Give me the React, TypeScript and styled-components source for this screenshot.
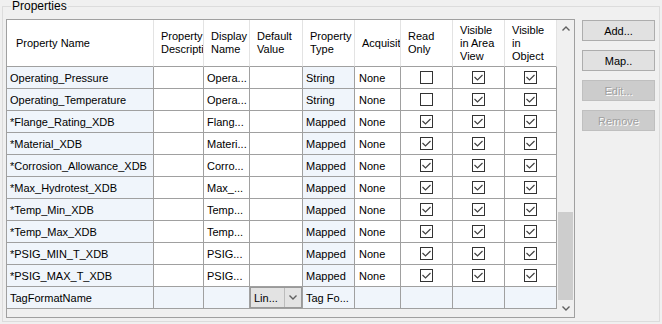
import styled, { createGlobalStyle } from 'styled-components'

const GlobalStyle = createGlobalStyle`
  html, body {
    margin: 0;
    padding: 0;
    background: #f0f0f0;
  }
  body {
    font-family: "Liberation Sans", Arial, sans-serif;
    font-size: 11px;
    color: #000;
  }
`

type Column = {
  title: string;
  width: number;
  pad?: number;
}

type PropertyRow = {
  name: string;
  display: string;
  type: string;
  acq: string;
  readOnly?: boolean;
  area?: boolean;
  obj?: boolean;
  combo?: string;
}

const columns: Column[] = [
  { title: 'Property Name', width: 147, pad: 9 },
  { title: 'Property\nDescription', width: 50 },
  { title: 'Display\nName', width: 46 },
  { title: 'Default\nValue', width: 53 },
  { title: 'Property\nType', width: 52 },
  { title: 'Acquisition', width: 46 },
  { title: 'Read\nOnly', width: 52 },
  { title: 'Visible\nin Area\nView', width: 52 },
  { title: 'Visible\nin\nObject', width: 52 },
]

const rows: PropertyRow[] = [
  { name: 'Operating_Pressure', display: 'Opera...', type: 'String', acq: 'None', readOnly: false, area: true, obj: true },
  { name: 'Operating_Temperature', display: 'Opera...', type: 'String', acq: 'None', readOnly: false, area: true, obj: true },
  { name: '*Flange_Rating_XDB', display: 'Flang...', type: 'Mapped', acq: 'None', readOnly: true, area: true, obj: true },
  { name: '*Material_XDB', display: 'Materi...', type: 'Mapped', acq: 'None', readOnly: true, area: true, obj: true },
  { name: '*Corrosion_Allowance_XDB', display: 'Corro...', type: 'Mapped', acq: 'None', readOnly: true, area: true, obj: true },
  { name: '*Max_Hydrotest_XDB', display: 'Max_...', type: 'Mapped', acq: 'None', readOnly: true, area: true, obj: true },
  { name: '*Temp_Min_XDB', display: 'Temp...', type: 'Mapped', acq: 'None', readOnly: true, area: true, obj: true },
  { name: '*Temp_Max_XDB', display: 'Temp...', type: 'Mapped', acq: 'None', readOnly: true, area: true, obj: true },
  { name: '*PSIG_MIN_T_XDB', display: 'PSIG...', type: 'Mapped', acq: 'None', readOnly: true, area: true, obj: true },
  { name: '*PSIG_MAX_T_XDB', display: 'PSIG...', type: 'Mapped', acq: 'None', readOnly: true, area: true, obj: true },
  { name: 'TagFormatName', display: '', type: 'Tag Fo...', acq: '', combo: 'Lin...' },
]

function CheckBox({ checked }: { checked: boolean }) {
  return (
    <Box>
      {checked && (
        <svg width="11" height="11" viewBox="0 0 11 11">
          <polyline points="1.5,5 4.5,8 9.5,3" fill="none" stroke="#404040" strokeWidth="1.2" />
        </svg>
      )}
    </Box>
  )
}

function Chevron({ up }: { up?: boolean }) {
  return (
    <svg width="8" height="5" viewBox="0 0 8 5">
      <polyline
        points={up ? '0.5,4.5 4,1 7.5,4.5' : '0.5,0.5 4,4 7.5,0.5'}
        fill="none"
        stroke="#606060"
        strokeWidth="1.4"
      />
    </svg>
  )
}

export default function App() {
  const template = columns.map((c) => `${c.width}px`).join(' ')

  return (
    <Page>
      <GlobalStyle />
      <Group>
        <Legend>Properties</Legend>
        <Content>
          <GridView>
            <TableArea>
              <Table style={{ gridTemplateColumns: template }}>
                {columns.map((col) => (
                  <HeaderCell key={col.title} $pad={col.pad ?? 7}>{col.title}</HeaderCell>
                ))}
                {rows.map((row) => {
                  const last = !!row.combo
                  return [
                    <Cell key={row.name + 'n'} $tint>{row.name}</Cell>,
                    <Cell key={row.name + 'd'} $tint={last}></Cell>,
                    <Cell key={row.name + 'dn'} $tint={last}>{row.display}</Cell>,
                    row.combo ? (
                      <ComboCell key={row.name + 'dv'}>
                        <Combo>
                          <ComboText>{row.combo}</ComboText>
                          <ComboButton><Chevron /></ComboButton>
                        </Combo>
                      </ComboCell>
                    ) : (
                      <Cell key={row.name + 'dv'}></Cell>
                    ),
                    <Cell key={row.name + 't'} $tint>{row.type}</Cell>,
                    <Cell key={row.name + 'a'} $tint={last} $pad={4}>{row.acq}</Cell>,
                    <Cell key={row.name + 'r'} $tint={last} $center>
                      {!last && <CheckBox checked={!!row.readOnly} />}
                    </Cell>,
                    <Cell key={row.name + 'v'} $tint={last} $center>
                      {!last && <CheckBox checked={!!row.area} />}
                    </Cell>,
                    <Cell key={row.name + 'o'} $tint={last} $center>
                      {!last && <CheckBox checked={!!row.obj} />}
                    </Cell>,
                  ]
                })}
              </Table>
              <Filler />
            </TableArea>
            <ScrollBar>
              <ArrowButton><Chevron up /></ArrowButton>
              <Track>
                <Thumb />
              </Track>
              <ArrowButton><Chevron /></ArrowButton>
            </ScrollBar>
          </GridView>
          <Buttons>
            <Button>Add...</Button>
            <Button>Map..</Button>
            <Button disabled>Edit...</Button>
            <Button disabled>Remove</Button>
          </Buttons>
        </Content>
      </Group>
    </Page>
  )
}

const Page = styled.div`
  width: 662px;
  height: 324px;
  box-sizing: border-box;
  padding: 0 2px 2px 2px;
  background: #f0f0f0;
  overflow: hidden;
`

const Group = styled.fieldset`
  margin: 0;
  height: 322px;
  box-sizing: border-box;
  border: 1px solid #dcdcdc;
  padding: 6px 3px 3px 3px;
  min-width: 0;
`

const Legend = styled.legend`
  margin-left: 5px;
  padding: 0 1px;
  line-height: 13px;
  font-size: 12px;
  color: #000;
`

const Content = styled.div`
  display: flex;
  gap: 7px;
  height: 299px;
`

const GridView = styled.div`
  width: 569px;
  height: 299px;
  box-sizing: border-box;
  border: 1px solid #a0a0a0;
  display: flex;
  background: #f0f0f0;
`

const TableArea = styled.div`
  width: 550px;
  display: flex;
  flex-direction: column;
`

const Table = styled.div`
  display: grid;
  grid-auto-rows: 22px;
  grid-template-rows: 47px;
  background: #fff;
`

const HeaderCell = styled.div<{ $pad: number }>`
  box-sizing: border-box;
  display: flex;
  align-items: center;
  padding-left: ${({ $pad }) => $pad}px;
  border-right: 1px solid #e3e3e3;
  border-bottom: 1px solid #a0a0a0;
  background: #fff;
  white-space: pre;
  overflow: hidden;
  line-height: 13px;
`

const Cell = styled.div<{ $tint?: boolean; $center?: boolean; $pad?: number }>`
  box-sizing: border-box;
  display: flex;
  align-items: center;
  justify-content: ${({ $center }) => ($center ? 'center' : 'flex-start')};
  padding-left: ${({ $center, $pad }) => ($center ? 0 : $pad ?? 3)}px;
  border-right: 1px solid #a0a0a0;
  border-bottom: 1px solid #a0a0a0;
  background: ${({ $tint }) => ($tint ? '#f0f5fb' : '#fff')};
  white-space: nowrap;
  overflow: hidden;
`

const ComboCell = styled.div`
  box-sizing: border-box;
  display: flex;
  border-right: 1px solid #a0a0a0;
  border-bottom: 1px solid #a0a0a0;
  background: #f0f5fb;
`

const Combo = styled.div`
  flex: 1;
  display: flex;
  box-sizing: border-box;
  border: 1px solid #999;
  background: #e3e3e3;
`

const ComboText = styled.div`
  flex: 1;
  display: flex;
  align-items: center;
  padding-left: 3px;
  white-space: nowrap;
  overflow: hidden;
`

const ComboButton = styled.div`
  width: 16px;
  display: flex;
  align-items: center;
  justify-content: center;
  border-left: 1px solid #bcbcbc;
`

const Box = styled.span`
  width: 13px;
  height: 13px;
  box-sizing: border-box;
  border: 1px solid #333;
  background: #fff;
  display: flex;
  align-items: center;
  justify-content: center;
`

const Filler = styled.div`
  flex: 1;
  background: #f0f0f0;
`

const ScrollBar = styled.div`
  width: 17px;
  display: flex;
  flex-direction: column;
  background: #f0f0f0;
`

const ArrowButton = styled.div`
  height: 17px;
  display: flex;
  align-items: center;
  justify-content: center;
`

const Track = styled.div`
  flex: 1;
  display: flex;
  flex-direction: column;
`

const Thumb = styled.div`
  margin: auto 1px 0 1px;
  height: 88px;
  background: #cdcdcd;
`

const Buttons = styled.div`
  display: flex;
  flex-direction: column;
  gap: 9px;
  padding-top: 1px;
`

const Button = styled.button`
  width: 73px;
  height: 21px;
  box-sizing: border-box;
  margin: 0;
  padding: 0;
  border: 1px solid #adadad;
  background: #e1e1e1;
  font-family: "Liberation Sans", Arial, sans-serif;
  font-size: 11px;
  color: #000;
  &:disabled {
    background: #cccccc;
    border-color: #bfbfbf;
    color: #a0a0a0;
    text-shadow: 1px 1px 0 #fff;
  }
`
